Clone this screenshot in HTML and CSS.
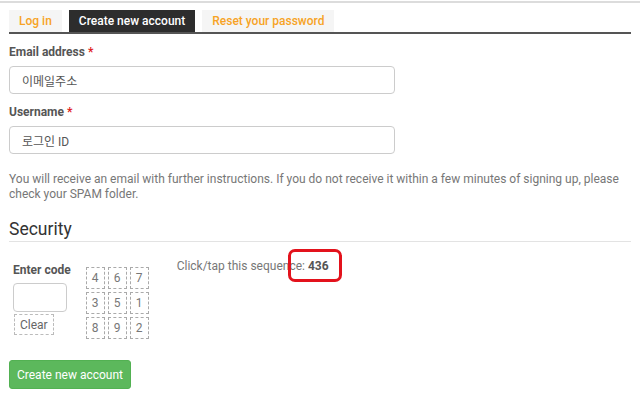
FILE: index.html
```html
<!DOCTYPE html>
<html lang="en">
<head>
    <meta charset="UTF-8">
    <title>Create new account</title>
    <link rel="stylesheet" href="styles.css">
</head>
<body>
    <div class="topbar"></div>

    <ul class="tabs">
        <li><a href="#">Log in</a></li>
        <li class="active"><a href="#">Create new account</a></li>
        <li><a href="#">Reset your password</a></li>
    </ul>

    <form class="register">
        <div class="field">
            <label for="mail">Email address <span class="req">*</span></label>
            <input type="text" id="mail" value="이메일주소">
        </div>
        <div class="field">
            <label for="name">Username <span class="req">*</span></label>
            <input type="text" id="name" value="로그인 ID">
        </div>

        <p class="note">You will receive an email with further instructions. If you do not receive it within a few minutes of signing up, please check your SPAM folder.</p>

        <h2 class="section">Security</h2>

        <div class="captcha">
            <div class="code">
                <div class="code-label">Enter code</div>
                <input type="text" class="code-input">
                <button type="button" class="clear">Clear</button>
            </div>
            <div class="pad">
                <span>4</span><span>6</span><span>7</span>
                <span>3</span><span>5</span><span>1</span>
                <span>8</span><span>9</span><span>2</span>
            </div>
            <div class="hint">
                Click/tap this sequence: <b>436</b>
                <span class="mark"></span>
            </div>
        </div>

        <button type="button" class="submit">Create new account</button>
    </form>
</body>
</html>
```

FILE: styles.css
```css
body {
    margin: 0;
    font-family: Roboto, "Noto Sans CJK KR", sans-serif;
    font-size: 12px;
    line-height: 15px;
    color: #666;
    background: #fff;
}
.topbar {
    height: 2px;
    margin-top: 1px;
    background: #dcdcdc;
}
.tabs {
    list-style: none;
    display: flex;
    gap: 7px;
    margin: 7px 9px 0 9px;
    padding: 0;
    border-bottom: 2px solid #555;
}
.tabs a {
    display: block;
    height: 22px;
    line-height: 22px;
    padding: 0 10px;
    background: #f5f5f5;
    color: #f7a325;
    font-weight: 500;
    text-decoration: none;
}
.tabs .active a {
    background: #2d2d2d;
    color: #fff;
}
.register {
    padding: 0 9px;
}
.field {
    margin-top: 11px;
}
.field label {
    display: block;
    font-weight: 700;
    color: #555;
    margin-bottom: 6px;
}
.req {
    color: #e02020;
}
.field input {
    display: block;
    box-sizing: border-box;
    width: 386px;
    height: 28px;
    padding: 0 12px;
    border: 1px solid #ccc;
    border-radius: 4px;
    font-family: inherit;
    font-size: 12px;
    color: #555;
}
.note {
    margin: 18px 0 0;
    color: #777;
}
.section {
    margin: 17px 0 0;
    padding-bottom: 1px;
    border-bottom: 1px solid #e3e3e3;
    font-size: 17.5px;
    line-height: 21px;
    font-weight: 400;
    color: #333;
}
.captcha {
    display: flex;
    align-items: flex-start;
    margin: 17px 0 0 4px;
}
.code {
    flex: 0 0 57px;
}
.code-label {
    margin-top: 4px;
    font-weight: 700;
    color: #555;
    white-space: nowrap;
}
.code-input {
    display: block;
    box-sizing: border-box;
    width: 54px;
    height: 29px;
    margin-top: 5px;
    border: 1px solid #ccc;
    border-radius: 4px;
}
.clear {
    display: block;
    box-sizing: border-box;
    height: 21px;
    margin: 2px 0 0 1px;
    padding: 0 5px;
    background: #fff;
    border: 1px dashed #bbb;
    font-family: inherit;
    font-size: 12px;
    color: #666;
}
.pad {
    display: grid;
    grid-template-columns: repeat(3, 19px);
    grid-auto-rows: 22px;
    gap: 3px;
    margin: 8px 0 0 15px;
}
.pad span {
    box-sizing: border-box;
    border: 1px dashed #aaa;
    text-align: center;
    line-height: 20px;
    color: #777;
}
.hint {
    position: relative;
    margin-left: 28px;
    color: #777;
    white-space: nowrap;
}
.hint b {
    color: #555;
}
.mark {
    position: absolute;
    left: 111px;
    top: -10px;
    width: 48px;
    height: 27px;
    border: 3px solid #e3121c;
    border-radius: 7px;
}
.submit {
    display: block;
    box-sizing: border-box;
    margin-top: 21px;
    width: 122px;
    height: 29px;
    padding: 0;
    background: #5cb85c;
    border: 1px solid #52b152;
    border-radius: 3px;
    color: #fff;
    font-family: inherit;
    font-size: 12px;
}
```
